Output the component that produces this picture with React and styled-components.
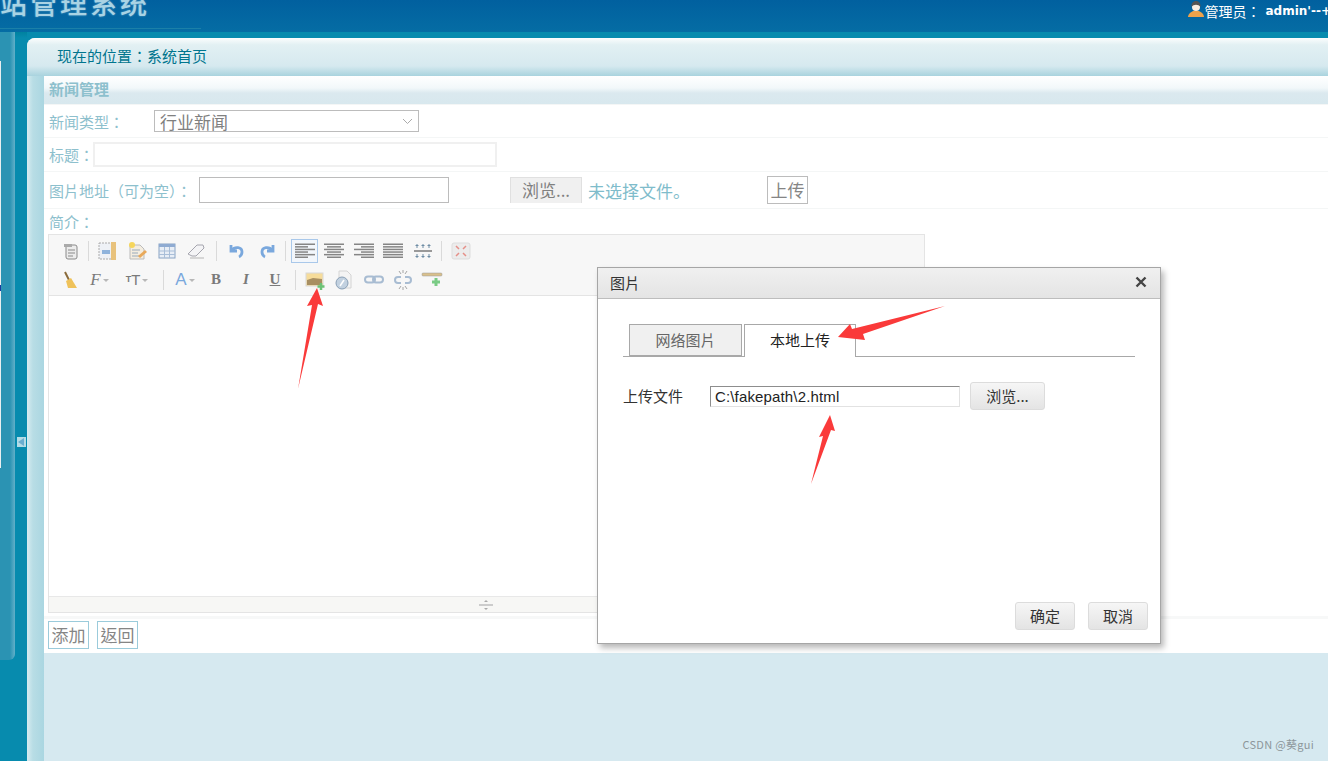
import React from "react";
import styled, { createGlobalStyle } from "styled-components";

const Global = createGlobalStyle`
  html, body { margin: 0; padding: 0; height: 761px; overflow: hidden; }
  body { font-family: "Noto Sans CJK TC", "Liberation Sans", sans-serif; background: #078bae; }
`;

const Page = styled.div`
  width: 1328px;
  height: 761px;
  display: flex;
  flex-direction: column;
  position: relative;
  overflow: hidden;
`;

const Header = styled.header`
  height: 32px;
  flex: none;
  display: flex;
  justify-content: space-between;
  background: linear-gradient(#01609f, #056da4);
`;

const Logo = styled.div`
  width: 201px;
  height: 28px;
  overflow: hidden;
  border-bottom: 1px solid #1b80a8;
  color: #a9d3e4;
  font-size: 27px;
  font-weight: 500;
  letter-spacing: 3px;
  line-height: 5px;
  white-space: nowrap;
  text-shadow: 0 0 2px rgba(169, 211, 228, 0.6);
`;

const User = styled.div`
  display: flex;
  align-items: flex-start;
  height: 23px;
  margin-right: -3px;
  color: #fff;
  font-size: 14px;
  line-height: 23px;
  white-space: nowrap;
  b { font-family: "DejaVu Sans", sans-serif; font-size: 12px; margin-left: 5px; }
`;

const Body = styled.div`
  flex: 1;
  display: flex;
  min-height: 0;
`;

const Side = styled.aside`
  width: 27px;
  flex: none;
  background: linear-gradient(#00829f 0, #078bae 6px);
  position: relative;
`;

const SideInner = styled.div`
  width: 15px;
  height: 628px;
  box-sizing: border-box;
  border-bottom-right-radius: 6px;
  background: linear-gradient(90deg, #2b93b3 0, #2b93b3 10px, #62b0c9 15px);
  display: flex;
`;

const SideWhite = styled.div`
  width: 1px;
  height: 407px;
  margin-top: 29px;
  background: #e8eef0;
  position: relative;
  &::after {
    content: "";
    position: absolute;
    left: 0;
    top: 224px;
    width: 1px;
    height: 6px;
    background: #1a3aa0;
  }
`;

const Toggle = styled.div`
  position: absolute;
  left: 17px;
  top: 405px;
  width: 9px;
  height: 10px;
  background: #b4dce6;
  &::after {
    content: "";
    position: absolute;
    left: 1px;
    top: 1px;
    border: 4px solid transparent;
    border-right: 6px solid #6aaed0;
    border-left: 0;
  }
`;

const Main = styled.main`
  flex: 1;
  margin-top: 6px;
  display: flex;
  flex-direction: column;
  border-top-left-radius: 8px;
  overflow: hidden;
  background: #d6e9f0;
`;

const Crumb = styled.div`
  height: 38px;
  flex: none;
  box-sizing: border-box;
  padding: 7px 0 0 30px;
  background: linear-gradient(#fbfdfd 0, #e2f0f3 7px, #d6e9ef 28px, #a9d3de 38px);
  color: #00758e;
  font-size: 15px;
  line-height: 21px;
`;

const Columns = styled.div`
  flex: 1;
  display: flex;
  min-height: 0;
`;

const Rail = styled.div`
  width: 17px;
  flex: none;
  background: linear-gradient(90deg, #d5ebf0 0, #b8dde5 6px, #aad6e1 17px);
`;

const Content = styled.section`
  flex: 1;
  display: flex;
  flex-direction: column;
  background: #d6e9f0;
`;

const Form = styled.div`
  height: 577px;
  flex: none;
  background: #fff;
  display: flex;
  flex-direction: column;
`;

const Title = styled.div`
  height: 28px;
  flex: none;
  box-sizing: border-box;
  padding-left: 5px;
  background: linear-gradient(#fff 0, #f2f8fa 12px, #dbe9ef 17px, #d8e8ee 28px);
  color: #8dc0cd;
  font-size: 15px;
  font-weight: 700;
  line-height: 26px;
`;

const Row = styled.div`
  height: ${(p) => p.$h}px;
  flex: none;
  box-sizing: border-box;
  display: flex;
  align-items: center;
  padding-left: 5px;
  border-top: 1px solid #f4f6f6;
  color: #8dc0cd;
  font-size: 15px;
  white-space: nowrap;
`;

const Label = styled.span`
  width: ${(p) => p.$w}px;
  flex: none;
`;

const FakeSelect = styled.div`
  width: 265px;
  height: 22px;
  box-sizing: border-box;
  border: 1px solid #bcbcbc;
  display: flex;
  align-items: center;
  justify-content: space-between;
  padding: 0 5px;
  color: #808080;
  font-size: 17px;
`;

const TextField = styled.div`
  width: ${(p) => p.$w}px;
  height: ${(p) => p.$h}px;
  box-sizing: border-box;
  flex: none;
  border: ${(p) => (p.$soft ? "2px solid #f0f0f0" : "1px solid #bcbcbc")};
`;

const BrowseButton = styled.div`
  width: 72px;
  height: 26px;
  margin-left: 61px;
  box-sizing: border-box;
  background: #f0f0f0;
  border: 1px solid #e0e0e0;
  border-bottom: 0;
  color: #808080;
  font-size: 17px;
  line-height: 24px;
  text-align: center;
`;

const FileName = styled.span`
  margin-left: 6px;
  width: 179px;
  color: #7fbccb;
  font-family: "Noto Sans CJK SC", sans-serif;
  font-size: 17px;
`;

const PlainButton = styled.div`
  width: ${(p) => p.$w}px;
  height: 28px;
  box-sizing: border-box;
  border: 1px solid ${(p) => p.$line};
  color: #858585;
  font-size: 17px;
  line-height: 25px;
  text-align: center;
  flex: none;
`;

const EditorRow = styled.div`
  flex: 1;
  box-sizing: border-box;
  border-top: 1px solid #f4f6f6;
  padding: 4px 0 0 4px;
  color: #8dc0cd;
  font-size: 15px;
  line-height: 18px;
`;

const EditorLabel = styled.div`
  padding-left: 1px;
`;

const Editor = styled.div`
  margin-top: 3px;
  width: 877px;
  height: 379px;
  box-sizing: border-box;
  border: 1px solid #e4e4e4;
  display: flex;
  flex-direction: column;
`;

const Toolbar = styled.div`
  height: 61px;
  flex: none;
  box-sizing: border-box;
  padding: 1px 0 0 6px;
  background: #f7f7f7;
  border-bottom: 1px solid #e4e4e4;
`;

const ToolLine = styled.div`
  height: 29px;
  display: flex;
  align-items: center;
`;

const Tool = styled.div`
  width: ${(p) => p.$w || 29.5}px;
  height: 24px;
  flex: none;
  box-sizing: border-box;
  display: flex;
  align-items: center;
  justify-content: center;
  margin-right: ${(p) => (p.$on ? 1.25 : 0)}px;
  border: 1px solid ${(p) => (p.$on ? "#a9c8ea" : "transparent")};
  background: ${(p) => (p.$on ? "#f2f6fb" : "transparent")};
`;

const Sep = styled.div`
  width: 1px;
  height: 20px;
  flex: none;
  margin: 0 ${(p) => p.$r ?? p.$l ?? 4}px 0 ${(p) => p.$l ?? 4}px;
  background: #dadada;
`;

const Letter = styled.span`
  color: ${(p) => p.$c || "#7a7a7a"};
  font-family: ${(p) => (p.$serif ? '"Liberation Serif", serif' : '"Liberation Sans", sans-serif')};
  font-size: ${(p) => p.$size || 15}px;
  font-weight: ${(p) => (p.$bold ? 700 : 400)};
  font-style: ${(p) => (p.$italic ? "italic" : "normal")};
  text-decoration: ${(p) => (p.$under ? "underline" : "none")};
  line-height: 1;
`;

const Caret = styled.span`
  width: 0;
  height: 0;
  margin: 2px 0 0 2px;
  border: 3px solid transparent;
  border-top: 3px solid #b8b8b8;
  border-bottom: 0;
`;

const EditArea = styled.div`
  flex: 1;
  background: #fff;
`;

const Grip = styled.div`
  height: 15px;
  flex: none;
  background: #f7f7f5;
  border-top: 1px solid #e8e8e8;
  display: flex;
  align-items: center;
  justify-content: center;
  padding-right: 2px;
`;

const Actions = styled.div`
  height: 37px;
  flex: none;
  box-sizing: border-box;
  border-top: 3px solid #f7f8f8;
  display: flex;
  gap: 8px;
  padding: 2px 0 0 4px;
`;

const Dialog = styled.div`
  position: absolute;
  left: 597px;
  top: 267px;
  width: 564px;
  height: 377px;
  box-sizing: border-box;
  background: #fff;
  border: 1px solid #a6a6a6;
  box-shadow: 3px 4px 6px rgba(0, 0, 0, 0.28);
  display: flex;
  flex-direction: column;
  color: #333;
  font-size: 15px;
`;

const DialogHead = styled.div`
  height: 31px;
  flex: none;
  box-sizing: border-box;
  padding: 0 13px 2px 12px;
  display: flex;
  align-items: center;
  justify-content: space-between;
  background: linear-gradient(#f0f0f0, #e4e4e4);
  border-bottom: 1px solid #bdbdbd;
`;

const Tabs = styled.div`
  margin: 25px 25px 0;
  height: 33px;
  flex: none;
  box-sizing: border-box;
  border-bottom: 1px solid #a8a8a8;
  display: flex;
  padding-left: 6px;
  gap: 2px;
`;

const Tab = styled.div`
  height: ${(p) => (p.$on ? 33 : 32)}px;
  width: ${(p) => (p.$on ? 112 : 113)}px;
  box-sizing: border-box;
  border: 1px solid #a8a8a8;
  border-bottom: ${(p) => (p.$on ? "0" : "1px solid #a8a8a8")};
  background: ${(p) => (p.$on ? "#fff" : "#f0f0f0")};
  color: ${(p) => (p.$on ? "#222" : "#666")};
  text-align: center;
  line-height: 29px;
`;

const UploadRow = styled.div`
  margin: 25px 0 0 25px;
  display: flex;
  align-items: center;
  height: 28px;
`;

const UploadLabel = styled.span`
  width: 87px;
  flex: none;
  padding-bottom: 2px;
`;

const PathField = styled.div`
  width: 250px;
  height: 21px;
  flex: none;
  box-sizing: border-box;
  border: 1px solid;
  border-color: #8d8d8d #e2e2e2 #e2e2e2 #8d8d8d;
  padding-left: 4px;
  color: #222;
  font-family: "Liberation Sans", sans-serif;
  font-size: 15px;
  letter-spacing: 0.15px;
  line-height: 19px;
`;

const GreyButton = styled.div`
  width: ${(p) => p.$w}px;
  height: 28px;
  box-sizing: border-box;
  flex: none;
  margin-left: ${(p) => p.$ml}px;
  border: 1px solid #dcdcdc;
  border-radius: 3px;
  background: linear-gradient(#f6f6f6, #e4e4e4);
  text-align: center;
  line-height: 25px;
`;

const DialogFoot = styled.div`
  margin-top: auto;
  display: flex;
  justify-content: flex-end;
  padding: 0 12px 13px 0;
`;

const Arrow = styled.svg`
  position: absolute;
  left: 0;
  top: 0;
  pointer-events: none;
`;

const Mark = styled.div`
  position: absolute;
  right: 14px;
  bottom: 9px;
  color: #8c969a;
  font-size: 11px;
  letter-spacing: 0.3px;
`;

const IconBox = ({ children }) => (
  <svg width="22" height="20" viewBox="0 0 22 20">
    {children}
  </svg>
);

const Lines = ({ rows }) => (
  <svg width="20" height="16" viewBox="0 0 20 16">
    {rows.map(([x, w], i) => (
      <rect key={i} x={x} y={i * 2.6 + 0.5} width={w} height="1.5" fill="#858585" />
    ))}
  </svg>
);

const RedArrow = ({ points }) => <polygon points={points} fill="#fa3a3a" />;

const left = [[0, 20], [0, 13], [0, 20], [0, 13], [0, 20], [0, 13]];
const center = [[0, 20], [3, 14], [0, 20], [3, 14], [0, 20], [3, 14]];
const right = [[0, 20], [7, 13], [0, 20], [7, 13], [0, 20], [7, 13]];
const full = [[0, 20], [0, 20], [0, 20], [0, 20], [0, 20], [0, 20]];

export default function App() {
  return (
    <Page>
      <Global />
      <Header>
        <Logo>站管理系统</Logo>
        <User>
          <svg width="16" height="18" viewBox="0 0 16 18">
            <path d="M0 17c0-3 3-5 5-6h6c2 1 5 3 5 6z" fill="#eda24b" />
            <circle cx="8" cy="7" r="4" fill="#fbeee2" />
            <path d="M3.500 7c-1-8 10-8 9 0-2-3-7-3-9 0z" fill="#555" />
          </svg>
          管理员：<b>admin'--+</b>
        </User>
      </Header>
      <Body>
        <Side>
          <SideInner>
            <SideWhite />
          </SideInner>
          <Toggle />
        </Side>
        <Main>
          <Crumb>现在的位置：系统首页</Crumb>
          <Columns>
            <Rail />
            <Content>
              <Form>
                <Title>新闻管理</Title>
                <Row $h={33}>
                  <Label $w={105}>新闻类型：</Label>
                  <FakeSelect>
                    行业新闻
                    <svg width="11" height="7" viewBox="0 0 11 7">
                      <path d="M1 1l4.500 4.500L10 1" fill="none" stroke="#aaa" />
                    </svg>
                  </FakeSelect>
                </Row>
                <Row $h={34}>
                  <Label $w={44}>标题：</Label>
                  <TextField $w={404} $h={25} $soft />
                </Row>
                <Row $h={37}>
                  <Label $w={150}>图片地址（可为空）：</Label>
                  <TextField $w={250} $h={26} />
                  <BrowseButton>浏览...</BrowseButton>
                  <FileName>未选择文件。</FileName>
                  <PlainButton $w={41} $line="#bcbcbc">上传</PlainButton>
                </Row>
                <EditorRow>
                  <EditorLabel>简介：</EditorLabel>
                  <Editor>
                    <Toolbar>
                      <ToolLine>
                        <Tool $w={29}>
                          <IconBox>
                            <rect x="7" y="4" width="11" height="14" rx="2" fill="#ececec" stroke="#8a8a8a" />
                            <path d="M5 3h8v3H5z" fill="#aaa" />
                            <path d="M9 9h7M9 12h7M9 15h5" stroke="#8a8a8a" />
                          </IconBox>
                        </Tool>
                        <Sep />
                        <Tool>
                          <IconBox>
                            <rect x="2" y="2" width="16" height="16" fill="#eef1f6" stroke="#aaa" strokeDasharray="2 1" />
                            <rect x="14" y="1" width="5" height="18" fill="#e8c27c" />
                            <rect x="5" y="9" width="8" height="4" fill="#8fb3dc" />
                          </IconBox>
                        </Tool>
                        <Tool>
                          <IconBox>
                            <path d="M4 4h10l4 4v10H4z" fill="#f4ede0" stroke="#bbb" />
                            <path d="M6 9h8M6 12h6M6 15h8" stroke="#9ab" />
                            <path d="M12 15l7-6 2 2-7 6z" fill="#e9a95a" />
                            <circle cx="6" cy="4" r="3" fill="#f6d65c" />
                          </IconBox>
                        </Tool>
                        <Tool>
                          <IconBox>
                            <rect x="3" y="3" width="16" height="14" fill="#e8eef6" stroke="#8aa4c4" />
                            <rect x="3" y="3" width="16" height="3" fill="#8fabd2" />
                            <path d="M3 10h16M3 13.500h16M8.500 6v11M13.500 6v11" stroke="#a9bed8" />
                          </IconBox>
                        </Tool>
                        <Tool>
                          <IconBox>
                            <path d="M3 13l9-9h6l1 3-8 8H7z" fill="#f4f4f6" stroke="#a5a5ae" />
                            <path d="M5 17h14" stroke="#b5b5b5" />
                          </IconBox>
                        </Tool>
                        <Sep $l={5} />
                        <Tool $w={30}>
                          <IconBox>
                            <path d="M5 4v6h6M5.500 9.500C9 5 16 6 16 11c0 2-1 4-3 5" fill="none" stroke="#7aa8dd" strokeWidth="2.800" />
                          </IconBox>
                        </Tool>
                        <Tool $w={30}>
                          <IconBox>
                            <path d="M17 4v6h-6M16.500 9.500C13 5 6 6 6 11c0 2 1 4 3 5" fill="none" stroke="#7aa8dd" strokeWidth="2.800" />
                          </IconBox>
                        </Tool>
                        <Sep $l={3} $r={5} />
                        <Tool $w={27} $on>
                          <Lines rows={left} />
                        </Tool>
                        <Tool>
                          <Lines rows={center} />
                        </Tool>
                        <Tool>
                          <Lines rows={right} />
                        </Tool>
                        <Tool>
                          <Lines rows={full} />
                        </Tool>
                        <Tool>
                          <IconBox>
                            <path d="M2 10h18" stroke="#999" strokeWidth="2" />
                            <path d="M5 3v4M11 3v4M17 3v4M5 13v4M11 13v4M17 13v4M3.500 4.500h3M9.500 4.500h3M15.500 4.500h3M3.500 15.500h3M9.500 15.500h3M15.500 15.500h3" stroke="#6f8da5" />
                          </IconBox>
                        </Tool>
                        <Sep />
                        <Tool $w={30}>
                          <IconBox>
                            <rect x="2" y="2" width="18" height="16" rx="2" fill="#ececec" stroke="#ddd" />
                            <path d="M6 5l3 3M16 5l-3 3M6 15l3-3M16 15l-3-3" stroke="#e58f88" strokeWidth="1.500" />
                          </IconBox>
                        </Tool>
                      </ToolLine>
                      <ToolLine>
                        <Tool $w={29}>
                          <IconBox>
                            <path d="M6 2l4 8" stroke="#8a6a3a" strokeWidth="2" />
                            <path d="M7 11l5-3 6 10H9z" fill="#efc25a" />
                          </IconBox>
                        </Tool>
                        <Tool $w={31}>
                          <Letter $serif $italic $size={17}>F</Letter><Caret />
                        </Tool>
                        <Tool $w={44}>
                          <Letter $bold $size={9}>T</Letter>
                          <Letter $size={15}>T</Letter>
                          <Caret />
                        </Tool>
                        <Sep />
                        <Tool $w={34}>
                          <Letter $c="#7aa8dd" $size={17}>A</Letter><Caret />
                        </Tool>
                        <Tool $w={28}>
                          <Letter $bold $serif>B</Letter>
                        </Tool>
                        <Tool $w={32}>
                          <Letter $bold $italic $serif>I</Letter>
                        </Tool>
                        <Tool $w={26}>
                          <Letter $bold $under $serif>U</Letter>
                        </Tool>
                        <Sep $l={7} $r={4.500} />
                        <Tool $w={29.250}>
                          <IconBox>
                            <rect x="2" y="3" width="17" height="13" fill="#f6dc9a" stroke="#d8d8d8" />
                            <path d="M3 10l6-2 9 1v6H3z" fill="#a88f62" />
                            <path d="M17 13v7M13.500 16.500h7" stroke="#6cc276" strokeWidth="2.500" />
                          </IconBox>
                        </Tool>
                        <Tool $w={29.250}>
                          <IconBox>
                            <path d="M6 1h8l4 4v13H6z" fill="#f4f4f4" stroke="#d4d4d4" />
                            <circle cx="9" cy="13" r="6" fill="#c2d1e0" stroke="#8aa0b6" />
                            <path d="M11 10l-4 6" stroke="#fff" strokeWidth="1.500" />
                          </IconBox>
                        </Tool>
                        <Tool $w={29.250}>
                          <IconBox>
                            <rect x="2" y="6.500" width="10" height="6" rx="3" fill="none" stroke="#a8bcd2" strokeWidth="2" />
                            <rect x="10" y="6.500" width="10" height="6" rx="3" fill="none" stroke="#a8bcd2" strokeWidth="2" />
                          </IconBox>
                        </Tool>
                        <Tool $w={29.250}>
                          <IconBox>
                            <path d="M9 7H6a3 3 0 0 0 0 6h3M13 7h3a3 3 0 0 1 0 6h-3" fill="none" stroke="#a8bcd2" strokeWidth="2" />
                            <path d="M7 1l2 3M15 1l-2 3M11 0v3M7 19l2-3M15 19l-2-3M11 20v-3" stroke="#a5a5a5" />
                          </IconBox>
                        </Tool>
                        <Tool $w={29.250}>
                          <IconBox>
                            <rect x="1" y="3" width="20" height="3" rx="1" fill="#d9c08c" stroke="#999" strokeWidth="0.500" />
                            <path d="M15 8v8M11 12h8" stroke="#7acb85" strokeWidth="3" />
                          </IconBox>
                        </Tool>
                      </ToolLine>
                    </Toolbar>
                    <EditArea />
                    <Grip>
                      <svg width="14" height="10" viewBox="0 0 14 10">
                        <path d="M0 5h14" stroke="#ccc" strokeWidth="2" />
                        <path d="M7 0l-2 2h4zM7 10l-2-2h4z" fill="#aaa" />
                      </svg>
                    </Grip>
                  </Editor>
                </EditorRow>
                <Actions>
                  <PlainButton $w={41} $line="#9bcbdb">添加</PlainButton>
                  <PlainButton $w={41} $line="#9bcbdb">返回</PlainButton>
                </Actions>
              </Form>
            </Content>
          </Columns>
        </Main>
      </Body>

      <Dialog>
        <DialogHead>
          图片
          <svg width="12" height="12" viewBox="0 0 12 12">
            <path d="M1.500 1.500l9 9M10.500 1.500l-9 9" stroke="#444" strokeWidth="2.400" />
          </svg>
        </DialogHead>
        <Tabs>
          <Tab>网络图片</Tab>
          <Tab $on>本地上传</Tab>
        </Tabs>
        <UploadRow>
          <UploadLabel>上传文件</UploadLabel>
          <PathField>C:\fakepath\2.html</PathField>
          <GreyButton $w={75} $ml={10}>浏览...</GreyButton>
        </UploadRow>
        <DialogFoot>
          <GreyButton $w={60} $ml={0}>确定</GreyButton>
          <GreyButton $w={60} $ml={13}>取消</GreyButton>
        </DialogFoot>
      </Dialog>

      <Arrow width="1328" height="761" viewBox="0 0 1328 761">
        <RedArrow points="298,389 312,305 307,306 317,288 323,306 318,304" />
        <RedArrow points="945,306 863,334 865,340 838,337 850,324 852,329" />
        <RedArrow points="811,484 823,436 819,437 830,415 835,431 831,430" />
      </Arrow>
      <Mark>CSDN @葵gui</Mark>
    </Page>
  );
}
